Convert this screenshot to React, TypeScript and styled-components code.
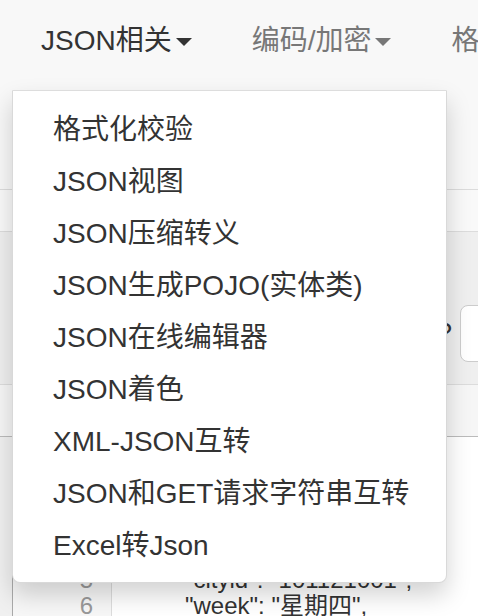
import React from "react";
import styled, { createGlobalStyle } from "styled-components";

const GlobalStyle = createGlobalStyle`
  html, body {
    margin: 0;
    padding: 0;
    background: #f0f0f0;
  }
  body {
    width: 478px;
    height: 616px;
    overflow: hidden;
    font-family: "Liberation Sans", "Noto Sans CJK SC", sans-serif;
    color: #333;
  }
`;

const Page = styled.div`
  position: relative;
  width: 478px;
  height: 616px;
  overflow: hidden;
`;

const Navbar = styled.div`
  height: 190px;
  box-sizing: border-box;
  background: #f8f8f8;
  border-bottom: 1px solid #dcdcdc;
`;

const Nav = styled.div`
  display: flex;
  padding: 21px 0 0 11px;
  white-space: nowrap;
`;

const NavLink = styled.div<{ $active?: boolean }>`
  display: flex;
  align-items: center;
  padding: 0 30px;
  font-size: 28px;
  line-height: 40px;
  color: ${(p) => (p.$active ? "#333" : "#777")};
`;

const Caret = styled.span<{ $active?: boolean }>`
  display: inline-block;
  width: 0;
  height: 0;
  margin-left: 4px;
  margin-top: 2px;
  border-top: 8px solid ${(p) => (p.$active ? "#333" : "#777")};
  border-left: 8px solid transparent;
  border-right: 8px solid transparent;
`;

const Strip = styled.div<{ $h: number; $bg: string; $line: string }>`
  height: ${(p) => p.$h}px;
  box-sizing: border-box;
  background: ${(p) => p.$bg};
  border-bottom: 1px solid ${(p) => p.$line};
`;

const FormRow = styled.div`
  height: 153px;
  box-sizing: border-box;
  background: #efefef;
  border-bottom: 1px solid #dcdcdc;
  display: flex;
  align-items: center;
  padding-top: 50px;
`;

const Label = styled.span`
  font-size: 28px;
  color: #333;
  margin-left: 16px;
`;

const LabelEnd = styled.span`
  font-size: 28px;
  color: #333;
  margin-left: auto;
`;

const Input = styled.div`
  width: 60px;
  height: 57px;
  margin-left: 8px;
  margin-right: -42px;
  box-sizing: border-box;
  background: #fff;
  border: 1px solid #ccc;
  border-radius: 8px;
`;

const Editor = styled.div`
  display: flex;
  margin-left: 12px;
  height: 200px;
  border-left: 1px solid #aaa;
  background: #fff;
`;

const Gutter = styled.div`
  width: 99px;
  background: #f7f7f7;
  border-right: 1px solid #ddd;
  padding-top: 26px;
  text-align: right;
  box-sizing: border-box;
  padding-right: 18px;
  font-size: 24px;
  line-height: 26px;
  color: #999;
`;

const Code = styled.pre`
  margin: 0;
  padding: 26px 0 0 0;
  font-family: "Liberation Sans", "Noto Sans CJK SC", sans-serif;
  font-size: 24px;
  line-height: 26px;
  color: #333;
`;

const CodeLine = styled.div<{ $indent: number }>`
  height: 26px;
  padding-left: ${(p) => p.$indent}px;
`;

const Menu = styled.div`
  position: absolute;
  top: 90px;
  left: 12px;
  width: 435px;
  box-sizing: border-box;
  padding: 13px 0 10px;
  background: #fff;
  border: 1px solid rgba(0, 0, 0, 0.15);
  border-top-color: #ddd;
  border-radius: 0 0 8px 8px;
  box-shadow: 0 12px 24px rgba(0, 0, 0, 0.175);
`;

const MenuItem = styled.div`
  padding: 6px 40px;
  font-size: 28px;
  line-height: 40px;
  color: #333;
  white-space: nowrap;
`;

const items = [
  "格式化校验",
  "JSON视图",
  "JSON压缩转义",
  "JSON生成POJO(实体类)",
  "JSON在线编辑器",
  "JSON着色",
  "XML-JSON互转",
  "JSON和GET请求字符串互转",
  "Excel转Json",
];

const code = [
  { indent: 20, text: "{" },
  { indent: 50, text: "\"desc\": \"OK\"," },
  { indent: 50, text: "\"status\": 1000," },
  { indent: 50, text: "\"data\": {" },
  { indent: 73, text: "\"cityid\": \"101121001\"," },
  { indent: 73, text: "\"week\": \"星期四\"," },
];

const App = () => (
  <Page>
    <GlobalStyle />
    <Navbar>
      <Nav>
        <NavLink $active>
          JSON相关
          <Caret $active />
        </NavLink>
        <NavLink>
          编码/加密
          <Caret />
        </NavLink>
        <NavLink>
          格式化
          <Caret />
        </NavLink>
      </Nav>
    </Navbar>
    <Strip $h={42} $bg="#f9f9f9" $line="#dcdcdc" />
    <FormRow>
      <Label>城市：</Label>
      <LabelEnd>?</LabelEnd>
      <Input />
    </FormRow>
    <Strip $h={52} $bg="#f6f6f6" $line="#bbb" />
    <Editor>
      <Gutter>
        {code.map((_, i) => (
          <div key={i}>{i + 1}</div>
        ))}
      </Gutter>
      <Code>
        {code.map((l, i) => (
          <CodeLine key={i} $indent={l.indent}>
            {l.text}
          </CodeLine>
        ))}
      </Code>
    </Editor>
    <Menu>
      {items.map((t) => (
        <MenuItem key={t}>{t}</MenuItem>
      ))}
    </Menu>
  </Page>
);

export default App;
